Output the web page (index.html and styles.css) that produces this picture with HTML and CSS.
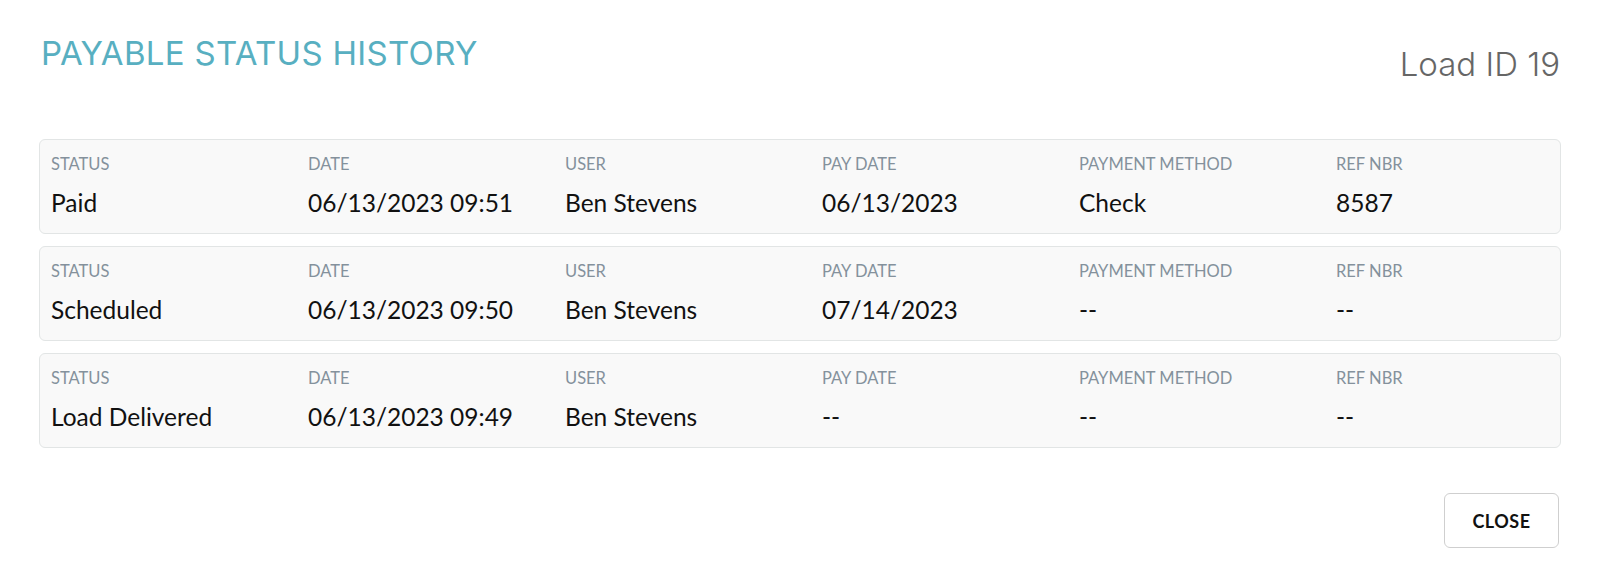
FILE: index.html
```html
<!DOCTYPE html>
<html>
<head>
<meta charset="utf-8">
<link rel="stylesheet" href="styles.css">
</head>
<body>
<div class="modal">
  <div class="header">
    <h1 class="title">PAYABLE STATUS HISTORY</h1>
    <div class="load-id">Load ID 19</div>
  </div>
  <div class="list">
    <div class="card">
      <div class="field"><div class="label">STATUS</div><div class="value">Paid</div></div>
      <div class="field"><div class="label">DATE</div><div class="value">06/13/2023 09:51</div></div>
      <div class="field"><div class="label">USER</div><div class="value">Ben Stevens</div></div>
      <div class="field"><div class="label">PAY DATE</div><div class="value">06/13/2023</div></div>
      <div class="field"><div class="label">PAYMENT METHOD</div><div class="value">Check</div></div>
      <div class="field"><div class="label">REF NBR</div><div class="value">8587</div></div>
    </div>
    <div class="card">
      <div class="field"><div class="label">STATUS</div><div class="value">Scheduled</div></div>
      <div class="field"><div class="label">DATE</div><div class="value">06/13/2023 09:50</div></div>
      <div class="field"><div class="label">USER</div><div class="value">Ben Stevens</div></div>
      <div class="field"><div class="label">PAY DATE</div><div class="value">07/14/2023</div></div>
      <div class="field"><div class="label">PAYMENT METHOD</div><div class="value">--</div></div>
      <div class="field"><div class="label">REF NBR</div><div class="value">--</div></div>
    </div>
    <div class="card">
      <div class="field"><div class="label">STATUS</div><div class="value">Load Delivered</div></div>
      <div class="field"><div class="label">DATE</div><div class="value">06/13/2023 09:49</div></div>
      <div class="field"><div class="label">USER</div><div class="value">Ben Stevens</div></div>
      <div class="field"><div class="label">PAY DATE</div><div class="value">--</div></div>
      <div class="field"><div class="label">PAYMENT METHOD</div><div class="value">--</div></div>
      <div class="field"><div class="label">REF NBR</div><div class="value">--</div></div>
    </div>
  </div>
  <div class="footer">
    <button class="btn-close">CLOSE</button>
  </div>
</div>
</body>
</html>
```

FILE: styles.css
```css
* { box-sizing: border-box; }
html, body { margin: 0; padding: 0; background: #fff; }
body { font-family: "Lato", "Open Sans", sans-serif; color: #111; }
.modal { padding: 30px 39px 0 39px; }
.header { display: flex; justify-content: space-between; align-items: flex-start; height: 109px; }
.title {
  margin: 3px 0 0 2px;
  font-family: "Inter", "Open Sans", sans-serif;
  font-weight: 400;
  font-size: 33px;
  line-height: 40px;
  letter-spacing: 0.3px;
  color: #58afc1;
}
.load-id {
  margin-top: 14px;
  margin-right: 1px;
  font-family: "Inter", "Open Sans", sans-serif;
  font-weight: 300;
  font-size: 33px;
  line-height: 40px;
  color: #666;
}
.list { display: flex; flex-direction: column; gap: 12px; }
.card {
  height: 95px;
  background: #f9f9f9;
  border: 1px solid #e2e5e5;
  border-radius: 6px;
  display: grid;
  grid-template-columns: repeat(6, 257px);
  padding: 14px 0 0 11px;
}
.label {
  font-size: 16.5px;
  line-height: 20px;
  color: #84919c;
  font-weight: 400;
}
.value {
  margin-top: 14px;
  font-size: 24.5px;
  line-height: 30px;
  color: #111;
}
.footer { display: flex; justify-content: flex-end; padding-top: 45px; padding-right: 2px; }
.btn-close {
  width: 115px;
  height: 55px;
  background: #fff;
  border: 1px solid #cfcfcf;
  border-radius: 6px;
  font-family: "Lato", sans-serif;
  font-weight: 700;
  font-size: 18px;
  color: #111;
  letter-spacing: 0.5px;
}
```
